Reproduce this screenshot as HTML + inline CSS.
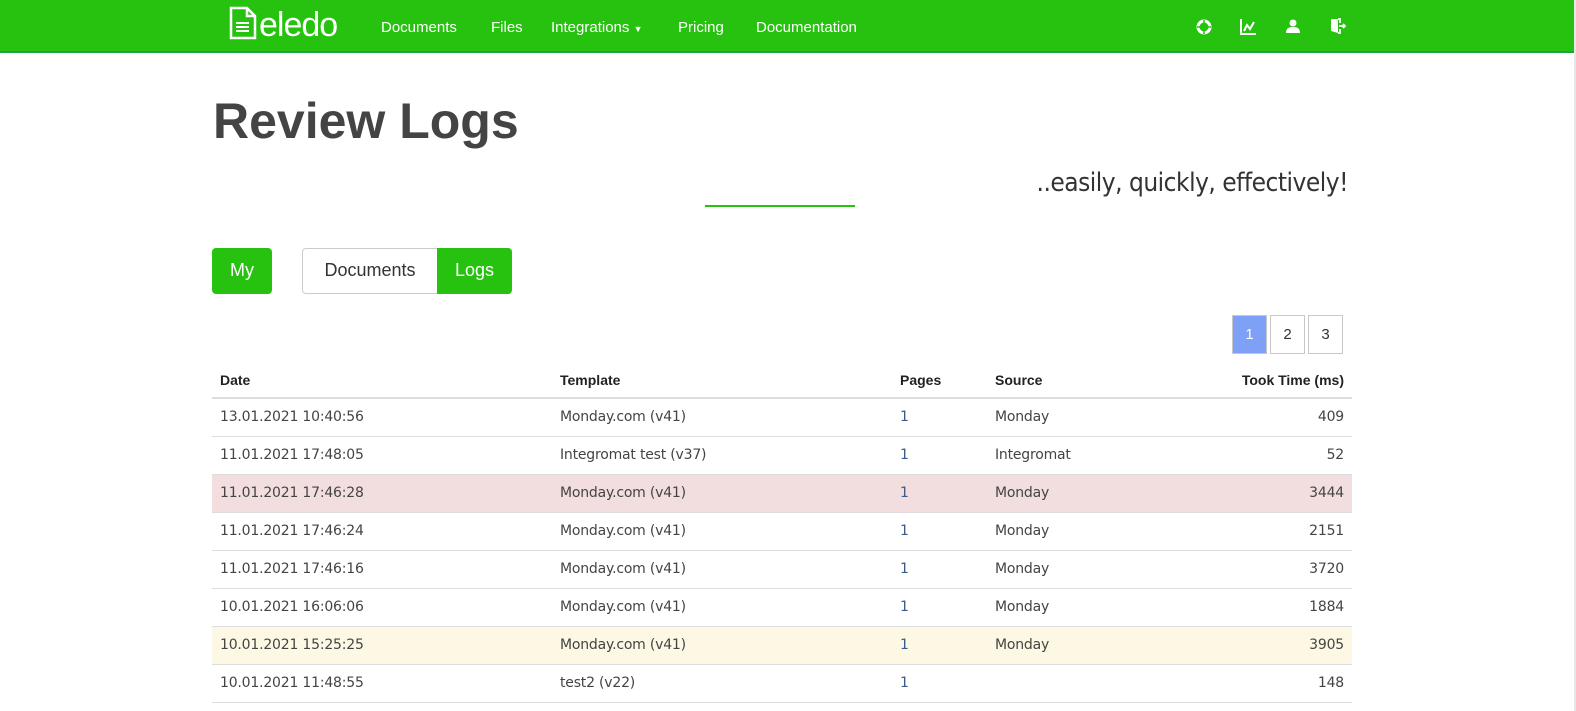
<!DOCTYPE html>
<html><head><style>
*{box-sizing:border-box;margin:0;padding:0}
body{width:1576px;height:711px;overflow:hidden;background:#fff;font-family:"Liberation Sans",sans-serif;color:#333;position:relative}
.nav{position:absolute;left:0;top:0;width:1574px;height:53px;background:#26c20f;border-bottom:2px solid #1aa34a}
.sb{position:absolute;right:0;top:0;width:2px;height:711px;background:#e8e8e8}
.nav a{position:absolute;top:19px;color:#fff;font-size:15px}
.logo{position:absolute;left:229px;top:6px;color:#fff;font-size:34px;letter-spacing:-1px}
h1{position:absolute;left:213px;top:92px;font-size:50px;font-weight:bold;color:#444}
.tag{position:absolute;right:228px;top:168px;font-size:26px;color:#333;font-family:"DejaVu Sans Condensed","Liberation Sans",sans-serif;letter-spacing:-0.5px}
.line{position:absolute;left:705px;top:205px;width:150px;height:2px;background:#26c20f}
.btn{position:absolute;top:248px;height:46px;font-size:18px;line-height:44px;text-align:center;border-radius:4px}
.pg{position:absolute;top:315px;width:35px;height:39px;border:1px solid #c8c8c8;text-align:center;line-height:37px;font-size:15px}
table{position:absolute;left:212px;top:360px;width:1140px;border-collapse:collapse;font-size:14px;font-family:"DejaVu Sans","Liberation Sans",sans-serif}
th{text-align:left;font-weight:bold;height:38px;padding:0 8px;border-bottom:2px solid #ddd;font-size:14px;color:#222;vertical-align:bottom;padding-bottom:9px;font-family:"Liberation Sans",sans-serif}
td{height:38px;padding:0 8px;border-bottom:1px solid #ddd;color:#444;letter-spacing:-0.2px}
.r{text-align:right}
td.p{color:#3a5a8a}
</style></head><body>
<div class="nav">
<div class="logo"><svg width="30" height="34" viewBox="0 0 30 34" style="vertical-align:-4px"><path d="M2 2h16l8 8v22H2z M18 2v8h8" fill="none" stroke="#fff" stroke-width="2.5"/><path d="M7 17h13M7 21h13M7 25h13" stroke="#fff" stroke-width="2"/></svg>eledo</div>
<a style="left:381px">Documents</a><a style="left:491px">Files</a><a style="left:551px">Integrations <span style="font-size:9px">▼</span></a><a style="left:678px">Pricing</a><a style="left:756px">Documentation</a>
<svg style="position:absolute;left:1196px;top:19px" width="16" height="16" viewBox="0 0 16 16"><circle cx="8" cy="8" r="6" fill="none" stroke="#fff" stroke-width="3"/><path d="M8 1v14M1 8h14" stroke="#26c20f" stroke-width="1.5"/></svg>
<svg style="position:absolute;left:1240px;top:18px" width="17" height="17" viewBox="0 0 17 17"><path d="M1 1v15h15M4 13l3-6 3 4 4-7" fill="none" stroke="#fff" stroke-width="2"/></svg>
<svg style="position:absolute;left:1286px;top:19px" width="14" height="14" viewBox="0 0 14 14"><circle cx="7" cy="4" r="3.5" fill="#fff"/><path d="M0 14c0-5 3-6 7-6s7 1 7 6z" fill="#fff"/></svg>
<svg style="position:absolute;left:1330px;top:18px" width="16" height="16" viewBox="0 0 16 16"><path d="M1 1h7v14L1 13z" fill="#fff"/><path d="M8 1h2v4M10 11v4H8M9 8h6M13 6l2 2-2 2" fill="none" stroke="#fff" stroke-width="1.8"/></svg>
</div>
<div class="sb"></div>
<h1>Review Logs</h1>
<div class="tag">..easily, quickly, effectively!</div>
<div class="line"></div>
<div class="btn" style="left:212px;width:60px;background:#26c20f;color:#fff">My</div>
<div class="btn" style="left:302px;width:210px;border:1px solid #ccc;border-radius:4px"></div>
<div class="btn" style="left:302px;width:136px;color:#333">Documents</div>
<div class="btn" style="left:437px;width:75px;background:#26c20f;color:#fff;border-radius:0 4px 4px 0">Logs</div>
<div class="pg" style="left:1232px;background:#7fa0f7;color:#fff">1</div>
<div class="pg" style="left:1270px">2</div>
<div class="pg" style="left:1308px">3</div>
<table>
<tr><th style="width:340px">Date</th><th style="width:340px">Template</th><th style="width:95px">Pages</th><th>Source</th><th class="r">Took Time (ms)</th></tr>
<tr><td>13.01.2021 10:40:56</td><td>Monday.com (v41)</td><td class="p">1</td><td>Monday</td><td class="r">409</td></tr>
<tr><td>11.01.2021 17:48:05</td><td>Integromat test (v37)</td><td class="p">1</td><td>Integromat</td><td class="r">52</td></tr>
<tr style="background:#f2dede"><td>11.01.2021 17:46:28</td><td>Monday.com (v41)</td><td class="p">1</td><td>Monday</td><td class="r">3444</td></tr>
<tr><td>11.01.2021 17:46:24</td><td>Monday.com (v41)</td><td class="p">1</td><td>Monday</td><td class="r">2151</td></tr>
<tr><td>11.01.2021 17:46:16</td><td>Monday.com (v41)</td><td class="p">1</td><td>Monday</td><td class="r">3720</td></tr>
<tr><td>10.01.2021 16:06:06</td><td>Monday.com (v41)</td><td class="p">1</td><td>Monday</td><td class="r">1884</td></tr>
<tr style="background:#fcf8e3"><td>10.01.2021 15:25:25</td><td>Monday.com (v41)</td><td class="p">1</td><td>Monday</td><td class="r">3905</td></tr>
<tr><td>10.01.2021 11:48:55</td><td>test2 (v22)</td><td class="p">1</td><td></td><td class="r">148</td></tr>
</table>
</body></html>
